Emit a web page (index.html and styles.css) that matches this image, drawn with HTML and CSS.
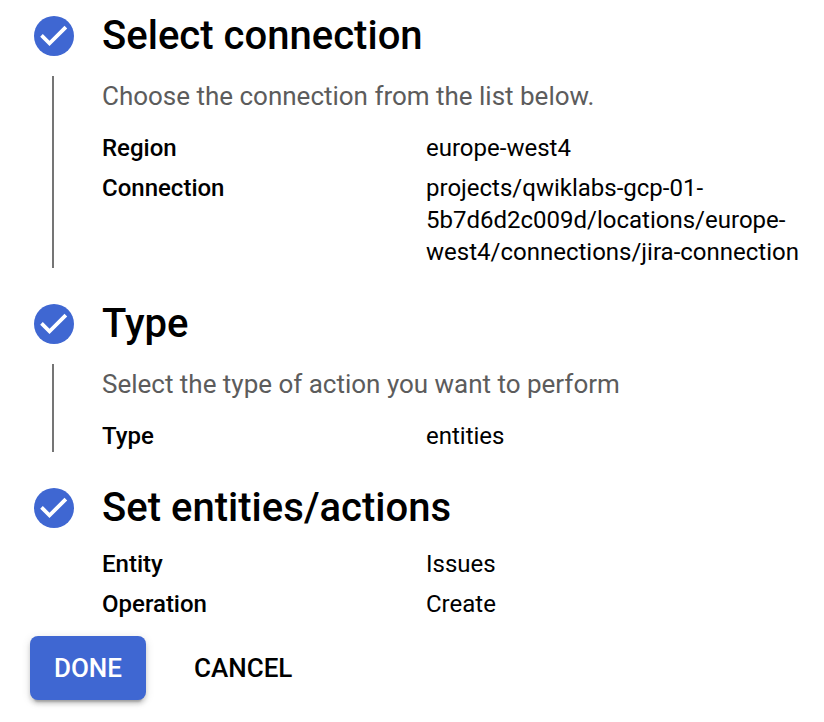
FILE: index.html
```html
<!DOCTYPE html>
<html lang="en">
<head>
<meta charset="utf-8">
<title>Configure connector</title>
<link rel="stylesheet" href="styles.css">
</head>
<body>
<main class="stepper">
  <section class="step">
    <div class="rail">
      <svg class="check" viewBox="0 0 40 40"><circle cx="20" cy="20" r="20"/><path d="M6.2 20.7L8.8 18l6.7 6.7L30.5 9.8l2.7 2.7L15.5 30z"/></svg>
      <span class="line"></span>
    </div>
    <div class="content">
      <h2>Select connection</h2>
      <p class="hint">Choose the connection from the list below.</p>
      <dl>
        <dt>Region</dt><dd>europe-west4</dd>
        <dt>Connection</dt><dd>projects/qwiklabs-gcp-01-<br>5b7d6d2c009d/locations/europe-<br>west4/connections/jira-connection</dd>
      </dl>
    </div>
  </section>
  <section class="step">
    <div class="rail">
      <svg class="check" viewBox="0 0 40 40"><circle cx="20" cy="20" r="20"/><path d="M6.2 20.7L8.8 18l6.7 6.7L30.5 9.8l2.7 2.7L15.5 30z"/></svg>
      <span class="line"></span>
    </div>
    <div class="content">
      <h2>Type</h2>
      <p class="hint">Select the type of action you want to perform</p>
      <dl><dt>Type</dt><dd>entities</dd></dl>
    </div>
  </section>
  <section class="step last">
    <div class="rail">
      <svg class="check" viewBox="0 0 40 40"><circle cx="20" cy="20" r="20"/><path d="M6.2 20.7L8.8 18l6.7 6.7L30.5 9.8l2.7 2.7L15.5 30z"/></svg>
    </div>
    <div class="content">
      <h2>Set entities/actions</h2>
      <dl>
        <dt>Entity</dt><dd>Issues</dd>
        <dt>Operation</dt><dd>Create</dd>
      </dl>
    </div>
  </section>
  <div class="actions">
    <button class="primary">DONE</button>
    <button class="plain">CANCEL</button>
  </div>
</main>
</body>
</html>
```

FILE: styles.css
```css
* { box-sizing: border-box; }
body {
  margin: 0;
  background: #fff;
  color: #000;
  font-family: Roboto, sans-serif;
}
.stepper { min-height: 722px; padding: 16px 0 0 34px; }
.step { display: flex; gap: 28px; margin-bottom: 36px; }
.rail { display: flex; flex-direction: column; width: 40px; }
.check { display: block; width: 40px; height: 40px; }
.check circle { fill: #3f67d2; }
.check path { fill: #fff; }
.line { flex: 1; width: 2px; margin: 20px 0 0 18px; background: #757575; }
.content { flex: 1; }
h2 {
  margin: 0;
  font-size: 40px;
  font-weight: 500;
  line-height: 40px;
  letter-spacing: .02px;
  white-space: nowrap;
}
.hint {
  margin: 24px 0 0;
  color: #5c5c5c;
  font-size: 26px;
  line-height: 32px;
  letter-spacing: -.01px;
  white-space: nowrap;
}
dl {
  display: grid;
  grid-template-columns: 324px 1fr;
  row-gap: 8px;
  margin: 20px 0 0;
  font-size: 24px;
  line-height: 32px;
}
dt { font-weight: 500; }
dd { margin: 0; white-space: nowrap; }
.last { margin-bottom: 16px; }
.actions { display: flex; gap: 24px; margin-left: -4px; }
button {
  height: 64px;
  padding: 0;
  border: 0;
  font: 500 26px/64px Roboto, sans-serif;
}
.primary {
  width: 116px;
  border-radius: 8px;
  background: #3f67d2;
  color: #fff;
  box-shadow: 0 6px 2px -4px rgba(0, 0, 0, .2), 0 4px 4px rgba(0, 0, 0, .14), 0 2px 10px rgba(0, 0, 0, .12);
}
.plain { padding: 0 24px; background: none; color: #000; }
```
